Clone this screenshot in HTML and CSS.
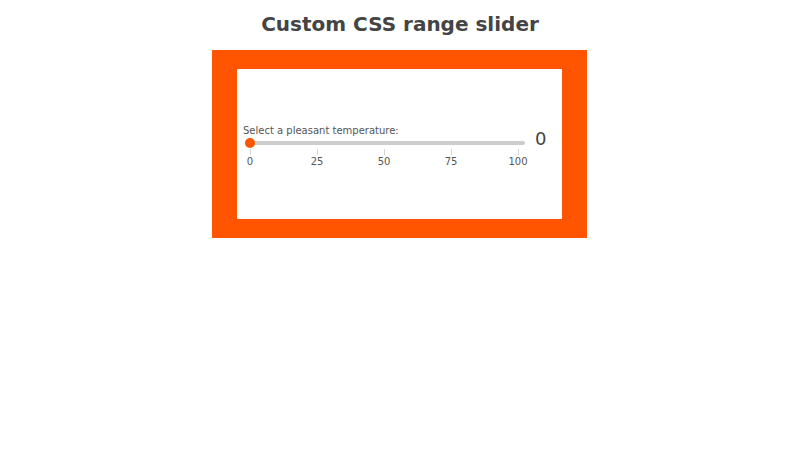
FILE: index.html
```html
<!DOCTYPE html>
<html lang="en">
<head>
<meta charset="utf-8">
<title>Custom CSS range slider</title>
<link rel="stylesheet" href="styles.css">
</head>
<body>
  <h1 class="title">Custom CSS range slider</h1>
  <div class="frame">
    <div class="panel">
      <div class="control">
        <label class="label" for="temp">Select a pleasant temperature:</label>
        <input class="range" id="temp" type="range" min="0" max="100" step="1" value="0">
        <div class="ticks">
          <div class="tick"><span class="mark"></span><span class="num">0</span></div>
          <div class="tick"><span class="mark"></span><span class="num">25</span></div>
          <div class="tick"><span class="mark"></span><span class="num">50</span></div>
          <div class="tick"><span class="mark"></span><span class="num">75</span></div>
          <div class="tick"><span class="mark"></span><span class="num">100</span></div>
        </div>
      </div>
      <output class="value" for="temp">0</output>
    </div>
  </div>
</body>
</html>
```
FILE: styles.css
```css
* {
  box-sizing: border-box;
}

body {
  margin: 0;
  background: #fff;
  font-family: "DejaVu Sans", "Liberation Sans", sans-serif;
  color: #444;
}

.title {
  margin: 13px 0 14px;
  font-size: 20px;
  font-weight: bold;
  line-height: 23px;
  text-align: center;
  color: #444;
}

/* orange frame around the white panel, kept on whole pixels */
.frame {
  width: 375px;
  margin: 0 0 0 calc(50% - 188px);
  padding: 19px 25px;
  background: #ff5500;
}

.panel {
  height: 150px;
  background: #fff;
  display: flex;
  align-items: center;
  padding-left: 8px;
}

.control {
  display: flex;
  flex-direction: column;
  width: 280px;
  margin-top: 5px;
}

.label {
  font-size: 10px;
  line-height: 12px;
  color: #555;
  margin-left: -2px;
}

.range {
  -webkit-appearance: none;
  appearance: none;
  width: 280px;
  height: 10px;
  margin: 1px 0 0;
  padding: 0;
  background: transparent;
  outline: none;
}

.range::-webkit-slider-runnable-track {
  height: 4px;
  background: #cccccc;
  border-radius: 2px;
}

.range::-webkit-slider-thumb {
  -webkit-appearance: none;
  width: 10px;
  height: 10px;
  margin-top: -3px;
  border: none;
  border-radius: 50%;
  background: #ff5500;
}

.ticks {
  display: flex;
  justify-content: space-between;
  margin: 0 -5px 0 -5px;
  padding-right: 2px;
}

.tick {
  width: 20px;
  display: flex;
  flex-direction: column;
  align-items: center;
}

.mark {
  width: 1px;
  height: 6px;
  margin-top: 1px;
  background: #d4d4d4;
}

.num {
  font-size: 10px;
  line-height: 12px;
  margin-top: 1px;
  color: #555;
}

.value {
  margin-left: 10px;
  margin-bottom: 10px;
  font-size: 18px;
  line-height: 20px;
  color: #444;
}
```
